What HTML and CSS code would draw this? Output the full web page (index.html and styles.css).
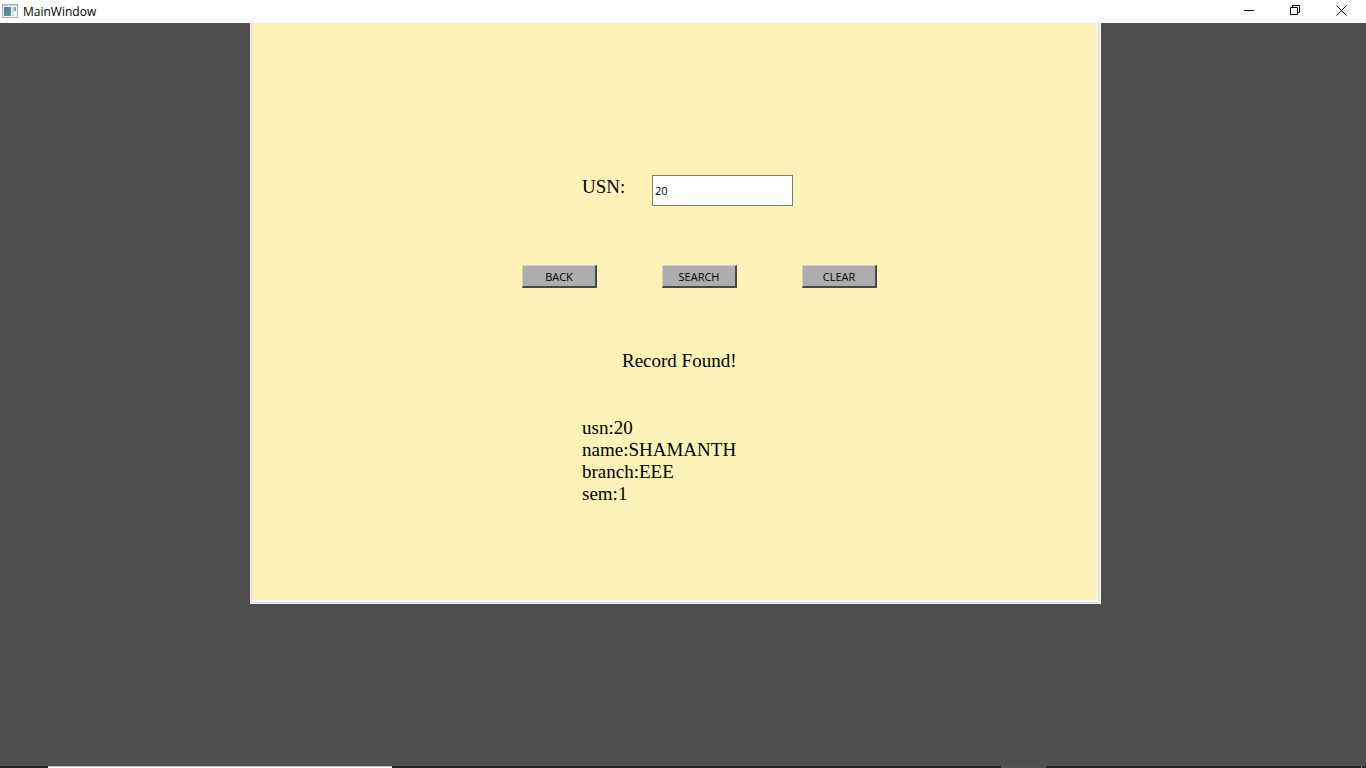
FILE: index.html
```html
<!DOCTYPE html>
<html lang="en">
<head>
<meta charset="utf-8">
<title>MainWindow</title>
<link rel="stylesheet" href="styles.css">
</head>
<body>
<header class="titlebar">
  <svg class="app-icon" width="16" height="14" viewBox="0 0 16 14" aria-hidden="true">
    <defs><linearGradient id="pane" x1="0" y1="0" x2="1" y2="1"><stop offset="0" stop-color="#4f78a8"/><stop offset="1" stop-color="#4fae74"/></linearGradient></defs>
    <rect x=".5" y=".5" width="15" height="13" fill="#f3f5f6" stroke="#a9b0b4"/>
    <path d="M1 1.5h14" stroke="#c9d2da"/>
    <rect x="2" y="3" width="7" height="9" fill="url(#pane)"/>
    <rect x="10" y="3" width="2" height="9" fill="#d4dadd"/>
    <rect x="12" y="3" width="2" height="4" fill="#8aa5a8"/>
  </svg>
  <h1 class="title">MainWindow</h1>
  <div class="window-controls">
    <button class="window-button" type="button" aria-label="Minimize"><svg width="11" height="11" viewBox="0 0 11 11"><path d="M0 5.5h10"/></svg></button>
    <button class="window-button" type="button" aria-label="Restore"><svg width="11" height="11" viewBox="0 0 11 11"><path d="M.5 2.5h7v7h-7zM2.5 2.5v-2h7v7h-2"/></svg></button>
    <button class="window-button" type="button" aria-label="Close"><svg width="11" height="11" viewBox="0 0 11 11"><path d="M.5.5l10 10M10.5.5l-10 10"/></svg></button>
  </div>
</header>
<main class="workspace">
  <form class="panel">
    <div class="field">
      <label class="label" for="usn">USN:</label>
      <input class="input" id="usn" type="text" value="20">
    </div>
    <div class="actions">
      <button class="button" type="button">BACK</button>
      <button class="button" type="button">SEARCH</button>
      <button class="button" type="button">CLEAR</button>
    </div>
    <p class="status">Record Found!</p>
    <div class="record">
      <div>usn:20</div>
      <div>name:SHAMANTH</div>
      <div>branch:EEE</div>
      <div>sem:1</div>
    </div>
  </form>
</main>
<footer class="taskbar">
  <span class="search-edge"></span>
  <span class="task-edge"></span>
  <span class="desktop-edge"></span>
</footer>
</body>
</html>
```
FILE: styles.css
```css
* { box-sizing: border-box; }
body {
  margin: 0;
  min-height: 100vh;
  display: flex;
  flex-direction: column;
  background: #4f4f4f;
  color: #000;
  font-family: "Open Sans", "Noto Sans", sans-serif;
}
.titlebar {
  display: flex;
  align-items: center;
  height: 23px;
  padding: 0 2px;
  background: #fff;
}
.app-icon {
  margin: 0 5px 2px 0;
}
.title {
  margin: 0;
  font-size: 12px;
  font-weight: 400;
  line-height: 23px;
}
.window-controls {
  display: flex;
  height: 100%;
  margin-left: auto;
}
.window-button {
  display: flex;
  justify-content: center;
  width: 46px;
  padding: 5px 0 0;
  border: 0;
  background: none;
}
.window-button svg {
  fill: none;
  stroke: #000;
}
.workspace {
  flex: 1;
  display: grid;
  grid-template-columns: 250fr 851fr 265fr;
  align-items: start;
}
.panel {
  grid-column: 2;
  padding: 152px 0 98px;
  border: 1px solid #f0f0f0;
  border-top: 0;
  border-right-width: 2px;
  background: #fff2b8;
  box-shadow: inset 1px 0 #dcdcdc, inset -1px -1px #dcdcdc, inset -2px -3px #fff;
  font-family: "Liberation Serif", serif;
  font-size: 19px;
  line-height: 22px;
}
.field {
  display: flex;
  padding-left: 331px;
}
.label {
  width: 70px;
  line-height: 24px;
}
.input {
  width: 141px;
  height: 31px;
  padding: 0 2px;
  border: 1px solid #7a7a7a;
  border-radius: 0;
  background: #fff;
  color: #000;
  font: 11px "Open Sans", "Noto Sans", sans-serif;
}
.actions {
  display: flex;
  gap: 65px;
  padding: 59px 0 0 271px;
}
.button {
  width: 75px;
  height: 23px;
  padding: 0;
  border: solid;
  border-width: 1px 2px 2px 1px;
  border-color: #d0d0d0 #484848 #484848 #d0d0d0;
  background: #adadad;
  color: #000;
  font: 11px "Open Sans", "Noto Sans", sans-serif;
}
.status {
  margin: 0;
  padding: 62px 0 0 371px;
}
.record { padding: 45px 0 0 331px; }
.taskbar {
  display: grid;
  grid-template-columns: 48fr 344fr 609fr 45fr 315fr 1px 4fr;
  height: 2px;
  background: #262326;
}
.search-edge {
  grid-column: 2;
  border-top: 1px solid #bdbdbd;
  background: #fff;
}
.task-edge {
  grid-column: 4;
  background: #555254;
}
.desktop-edge {
  grid-column: 6;
  background: #8a8a8a;
}
```
